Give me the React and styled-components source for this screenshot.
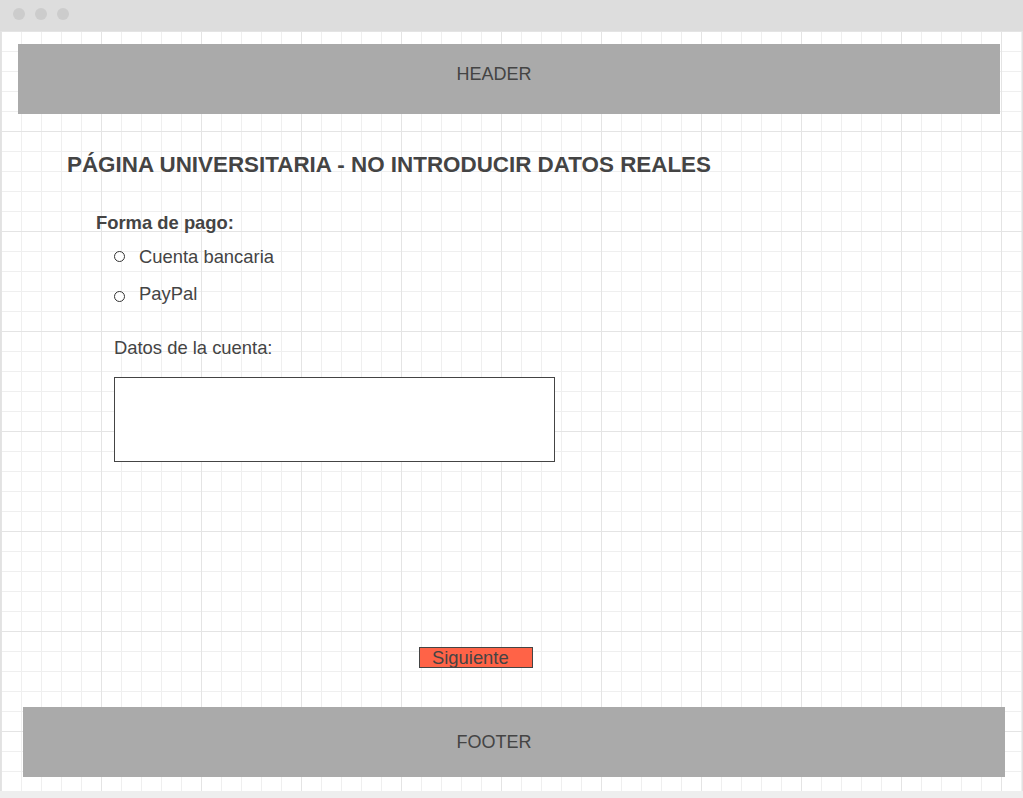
import React from 'react';
import styled, { createGlobalStyle } from 'styled-components';

const GlobalStyle = createGlobalStyle`
  html, body {
    margin: 0;
    padding: 0;
    background: #eeeeee;
  }
  body {
    font-family: "Liberation Sans", Arial, sans-serif;
    color: #444444;
  }
`;

const Window = styled.div`
  width: 1023px;
  height: 798px;
  display: flex;
  flex-direction: column;
  background: #eeeeee;
  overflow: hidden;
`;

const TitleBar = styled.div`
  height: 31px;
  flex-shrink: 0;
  background: #dddddd;
  display: flex;
  align-items: center;
  gap: 10px;
  padding: 0 0 3px 13px;
  box-sizing: border-box;
`;

const Dot = styled.span`
  width: 12px;
  height: 12px;
  border-radius: 50%;
  background: #cccccc;
`;

const Canvas = styled.div`
  height: 760px;
  width: 1021px;
  border-left: 1px solid #e2e2e2;
  border-right: 1px solid #e2e2e2;
  display: flex;
  flex-direction: column;
  background-color: #ffffff;
  background-image:
    linear-gradient(to right, #e4e4e4 1px, transparent 1px),
    linear-gradient(to bottom, #e4e4e4 1px, transparent 1px),
    linear-gradient(to right, #efefef 1px, transparent 1px),
    linear-gradient(to bottom, #efefef 1px, transparent 1px);
  background-size: 100px 100px, 100px 100px, 20px 20px, 20px 20px;
`;

const Band = styled.div`
  width: 982px;
  height: 70px;
  flex-shrink: 0;
  margin-left: ${({ $left }) => $left}px;
  margin-top: ${({ $top }) => $top}px;
  padding-right: ${({ $shift }) => $shift}px;
  padding-bottom: ${({ $lift }) => $lift || 0}px;
  box-sizing: border-box;
  background: #aaaaaa;
  display: flex;
  align-items: center;
  justify-content: center;
  font-size: 18px;
  color: #444444;
`;

const Title = styled.h1`
  margin: 38px 0 0 66px;
  font-size: 22.4px;
  line-height: 26px;
  font-weight: bold;
  color: #444444;
`;

const Section = styled.div`
  margin: 34px 0 0 95px;
  display: flex;
  flex-direction: column;
`;

const Label = styled.div`
  font-size: 18.4px;
  line-height: 22px;
  font-weight: bold;
`;

const Options = styled.div`
  margin: 12px 0 0 18px;
  display: flex;
  flex-direction: column;
  gap: 15px;
`;

const Option = styled.label`
  display: flex;
  align-items: center;
  gap: 14px;
  font-size: 18.4px;
  line-height: 22px;
`;

const Radio = styled.span`
  width: 11px;
  height: 11px;
  box-sizing: border-box;
  border: 1px solid #333333;
  border-radius: 50%;
  background: #ffffff;
  margin-top: ${({ $drop }) => $drop}px;
`;

const FieldLabel = styled.div`
  margin: 32px 0 0 18px;
  font-size: 18.4px;
  line-height: 22px;
`;

const TextBox = styled.div`
  margin: 18px 0 0 18px;
  width: 441px;
  height: 85px;
  box-sizing: border-box;
  border: 1px solid #444444;
  background: #ffffff;
`;

const Button = styled.button`
  margin: 185px 0 0 418px;
  width: 114px;
  height: 21px;
  box-sizing: border-box;
  padding: 0 0 0 12px;
  border: 1px solid #444444;
  border-radius: 0;
  background: #ff6347;
  color: #444444;
  font-family: "Liberation Sans", Arial, sans-serif;
  font-size: 18.4px;
  line-height: 19px;
  text-align: left;
  align-self: flex-start;
`;

export default function App() {
  return (
    <Window>
      <GlobalStyle />
      <TitleBar>
        <Dot />
        <Dot />
        <Dot />
      </TitleBar>
      <Canvas>
        <Band $left={17} $top={13} $shift={30} $lift={10}>HEADER</Band>
        <Title>PÁGINA UNIVERSITARIA - NO INTRODUCIR DATOS REALES</Title>
        <Section>
          <Label>Forma de pago:</Label>
          <Options>
            <Option><Radio $drop={-2} />Cuenta bancaria</Option>
            <Option><Radio $drop={4} />PayPal</Option>
          </Options>
          <FieldLabel>Datos de la cuenta:</FieldLabel>
          <TextBox />
        </Section>
        <Button>Siguiente</Button>
        <Band $left={22} $top={39} $shift={40}>FOOTER</Band>
      </Canvas>
    </Window>
  );
}
